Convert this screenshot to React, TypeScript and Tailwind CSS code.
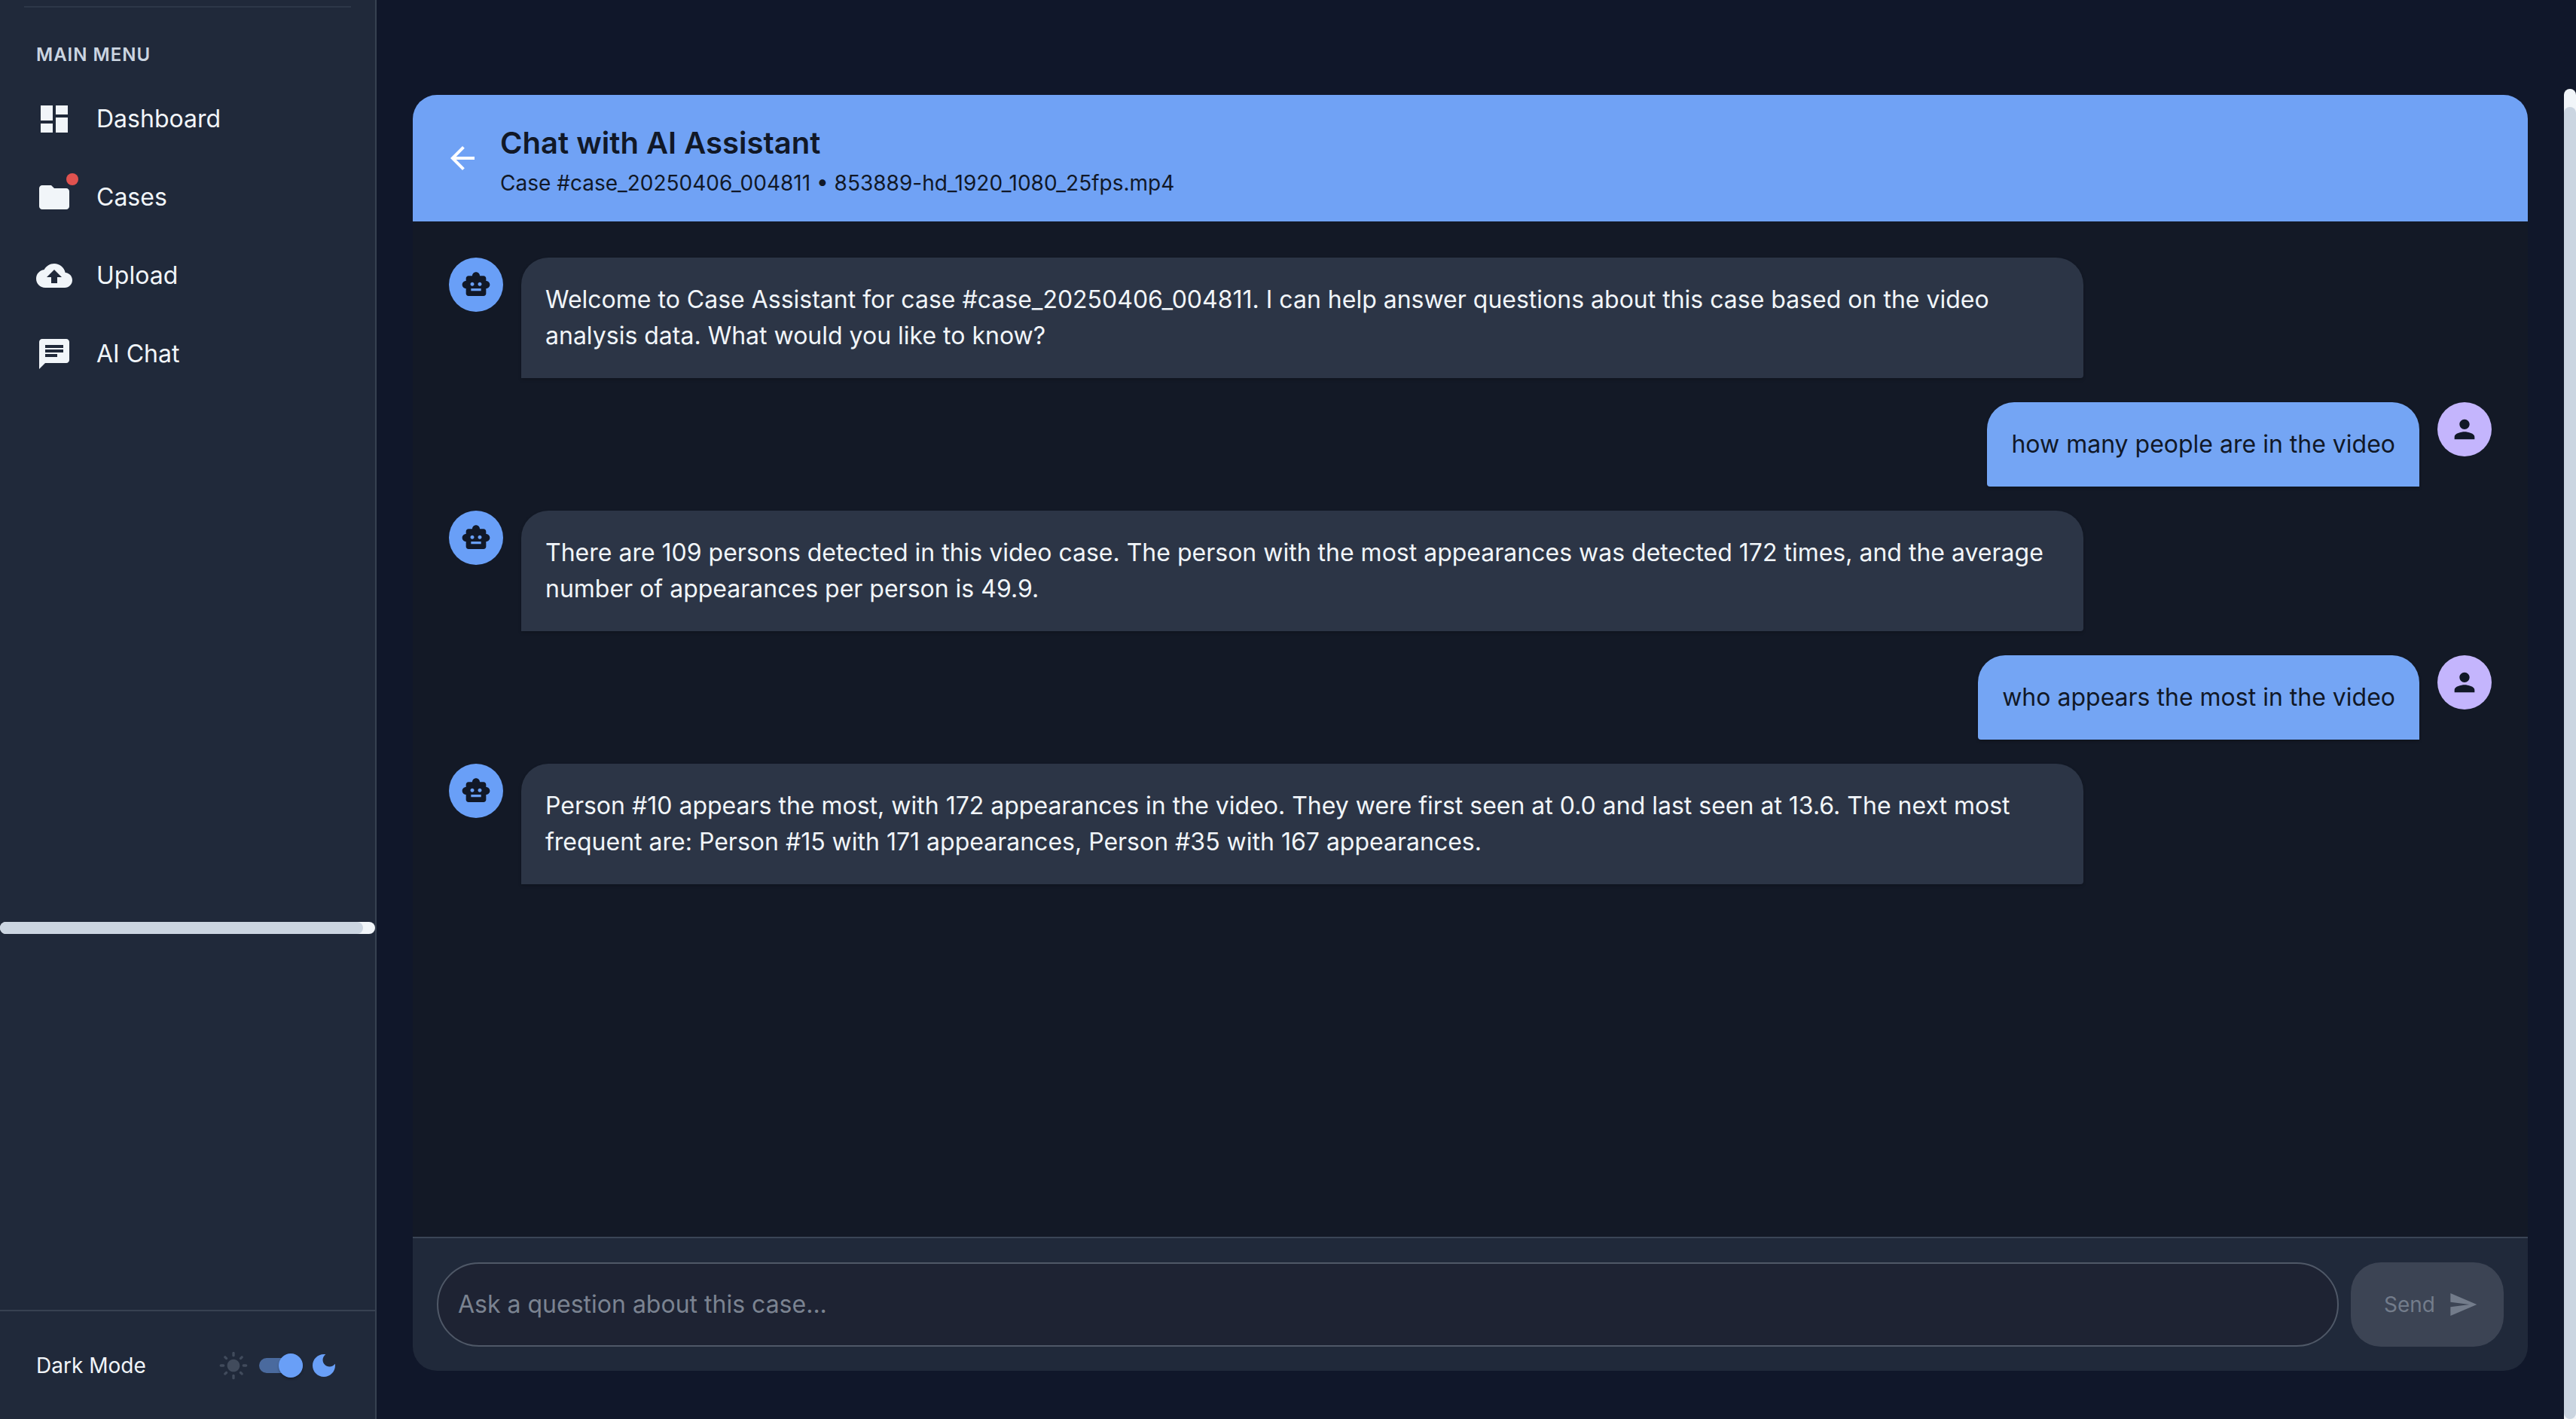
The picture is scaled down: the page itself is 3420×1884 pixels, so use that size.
const D = {
  dashboard: 'M3 13h8V3H3v10zm0 8h8v-6H3v6zm10 0h8V11h-8v10zm0-18v6h8V3h-8z',
  folder: 'M10 4H4c-1.1 0-1.99.9-1.99 2L2 18c0 1.1.9 2 2 2h16c1.1 0 2-.9 2-2V8c0-1.1-.9-2-2-2h-8l-2-2z',
  upload: 'M19.35 10.04C18.67 6.59 15.64 4 12 4 9.11 4 6.6 5.64 5.35 8.04 2.34 8.36 0 10.91 0 14c0 3.31 2.69 6 6 6h13c2.76 0 5-2.24 5-5 0-2.64-2.05-4.78-4.65-4.96zM14 13v4h-4v-4H7l5-5 5 5h-3z',
  chat: 'M20 2H4c-1.1 0-1.99.9-1.99 2L2 22l4-4h14c1.1 0 2-.9 2-2V4c0-1.1-.9-2-2-2zM6 9h12v2H6V9zm8 5H6v-2h8v2zm4-6H6V6h12v2z',
  toy: 'M20 9V7c0-1.1-.9-2-2-2h-3c0-1.66-1.34-3-3-3S9 3.34 9 5H6c-1.1 0-2 .9-2 2v2c-1.66 0-3 1.34-3 3s1.34 3 3 3v4c0 1.1.9 2 2 2h12c1.1 0 2-.9 2-2v-4c1.66 0 3-1.34 3-3s-1.34-3-3-3zM7.5 11.5c0-.83.67-1.5 1.5-1.5s1.5.67 1.5 1.5S9.83 13 9 13s-1.5-.67-1.5-1.5zM16 17H8v-2h8v2zm-1-4c-.83 0-1.5-.67-1.5-1.5S14.17 10 15 10s1.5.67 1.5 1.5S15.83 13 15 13z',
  person: 'M12 12c2.21 0 4-1.79 4-4s-1.79-4-4-4-4 1.79-4 4 1.79 4 4 4zm0 2c-2.67 0-8 1.34-8 4v2h16v-2c0-2.66-5.33-4-8-4z',
  back: 'M20 11H7.83l5.59-5.59L12 4l-8 8 8 8 1.41-1.41L7.83 13H20v-2z',
  send: 'M2.01 21L23 12 2.01 3 2 10l15 2-15 2z',
  sun: 'M12 7c-2.76 0-5 2.24-5 5s2.24 5 5 5 5-2.24 5-5-2.24-5-5-5zM2 13h2c.55 0 1-.45 1-1s-.45-1-1-1H2c-.55 0-1 .45-1 1s.45 1 1 1zm18 0h2c.55 0 1-.45 1-1s-.45-1-1-1h-2c-.55 0-1 .45-1 1s.45 1 1 1zM11 2v2c0 .55.45 1 1 1s1-.45 1-1V2c0-.55-.45-1-1-1s-1 .45-1 1zm0 18v2c0 .55.45 1 1 1s1-.45 1-1v-2c0-.55-.45-1-1-1s-1 .45-1 1zM5.99 4.58c-.39-.39-1.03-.39-1.41 0-.39.39-.39 1.03 0 1.41l1.06 1.06c.39.39 1.03.39 1.41 0s.39-1.03 0-1.41L5.99 4.58zm12.37 12.37c-.39-.39-1.03-.39-1.41 0-.39.39-.39 1.03 0 1.41l1.06 1.06c.39.39 1.03.39 1.41 0 .39-.39.39-1.03 0-1.41l-1.06-1.06zm1.06-10.96c.39-.39.39-1.03 0-1.41-.39-.39-1.03-.39-1.41 0l-1.06 1.06c-.39.39-.39 1.03 0 1.41s1.03.39 1.41 0l1.06-1.06zM7.05 18.36c.39-.39.39-1.03 0-1.41-.39-.39-1.03-.39-1.41 0l-1.06 1.06c-.39.39-.39 1.03 0 1.41s1.03.39 1.41 0l1.06-1.06z',
  moon: 'M12 3c-4.97 0-9 4.03-9 9s4.03 9 9 9 9-4.03 9-9c0-.46-.04-.92-.1-1.36-.98 1.37-2.58 2.26-4.4 2.26-2.98 0-5.4-2.42-5.4-5.4 0-1.81.89-3.42 2.26-4.4-.44-.06-.9-.1-1.36-.1z',
};

function Icon({ d, className }: { d: string; className: string }) {
  return (
    <svg viewBox="0 0 24 24" fill="currentColor" className={className}>
      <path d={d} />
    </svg>
  );
}

function NavItem({ d, label, badge }: { d: string; label: string; badge?: boolean }) {
  return (
    <div className="flex h-[104px] items-center pl-12 text-[32px] leading-[48px] text-[#f1f5f9]">
      <div className="relative w-[80px] shrink-0">
        <Icon d={d} className="h-12 w-12" />
        {badge && <span className="absolute left-10 top-[-8px] h-4 w-4 rounded-full bg-[#e0524f]" />}
      </div>
      <span>{label}</span>
    </div>
  );
}

function AgentMessage({ text }: { text: string }) {
  return (
    <div className="flex items-start gap-6">
      <div className="flex h-[72px] w-[72px] shrink-0 items-center justify-center rounded-full bg-[#699ff7] text-[#111827]">
        <Icon d={D.toy} className="h-10 w-10" />
      </div>
      <div className="w-[2074px] rounded-t-[36px] rounded-br-[4px] bg-[#2c3546] p-8 text-[32px] leading-[48px] text-[#f1f5f9] shadow-[0_2px_4px_rgba(0,0,0,0.2)]">
        {text}
      </div>
    </div>
  );
}

function UserMessage({ text }: { text: string }) {
  return (
    <div className="flex items-start justify-end gap-6">
      <div className="rounded-t-[36px] rounded-bl-[4px] bg-[#74a5f4] p-8 text-[32px] leading-[48px] text-[#111827] shadow-[0_2px_4px_rgba(0,0,0,0.2)]">
        {text}
      </div>
      <div className="flex h-[72px] w-[72px] shrink-0 items-center justify-center rounded-full bg-[#c4b5fd] text-[#111827]">
        <Icon d={D.person} className="h-10 w-10" />
      </div>
    </div>
  );
}

export default function App() {
  return (
    <div className="flex h-[1884px] w-[3420px] overflow-hidden bg-[#10172a] font-['Inter',sans-serif]">
      {/* Sidebar */}
      <aside className="flex w-[500px] shrink-0 flex-col border-r-2 border-[#374151] bg-[#20293a]">
        <div className="flex h-[1240px] shrink-0 flex-col justify-between">
          <div>
            <div className="mx-8 mt-2 h-0.5 bg-[#2d3748]" />
            <div className="mb-[18px] mt-[48px] pl-12 text-[24px] font-semibold leading-[30px] tracking-[1px] text-[#cbd5e1]">
              MAIN MENU
            </div>
            <NavItem d={D.dashboard} label="Dashboard" />
            <NavItem d={D.folder} label="Cases" badge />
            <NavItem d={D.upload} label="Upload" />
            <NavItem d={D.chat} label="AI Chat" />
          </div>
          <div className="h-4 rounded-full bg-[#f1f5f9]">
            <div className="h-4 w-[482px] rounded-full bg-[#cbd5e1]" />
          </div>
        </div>
        <div className="flex-1" />
        <div className="flex h-[145px] items-center border-t-2 border-[#374151] pl-12 pr-[48px]">
          <span className="text-[28px] text-[#f1f5f9]">Dark Mode</span>
          <div className="ml-auto flex items-center">
            <Icon d={D.sun} className="h-10 w-10 text-[#414b5c]" />
            <div className="relative ml-[14px] mr-2 h-5 w-[58px] rounded-full bg-[#4a6a9e]">
              <span className="absolute right-0 top-[-6px] h-8 w-8 rounded-full bg-[#699ff7] shadow-[0_2px_3px_rgba(0,0,0,0.25)]" />
            </div>
            <Icon d={D.moon} className="h-10 w-10 text-[#699ff7]" />
          </div>
        </div>
      </aside>

      {/* Main */}
      <main className="flex min-w-0 flex-1 flex-col pb-16 pl-12 pr-12 pt-[126px]">
        <div className="flex flex-1 flex-col overflow-hidden rounded-[32px]">
          <header className="flex h-[168px] shrink-0 items-center bg-[#70a2f5] pl-[42px]">
            <Icon d={D.back} className="h-12 w-12 text-white" />
            <div className="ml-[26px] pt-[9px] text-[#111827]">
              <div className="text-[40px] font-semibold leading-[48px]">Chat with AI Assistant</div>
              <div className="mt-[9px] text-[28px] leading-[40px]">Case #case_20250406_004811 • 853889-hd_1920_1080_25fps.mp4</div>
            </div>
          </header>

          <div className="flex flex-1 flex-col gap-8 bg-[#131926] px-12 pt-12">
            <AgentMessage text="Welcome to Case Assistant for case #case_20250406_004811. I can help answer questions about this case based on the video analysis data. What would you like to know?" />
            <UserMessage text="how many people are in the video" />
            <AgentMessage text="There are 109 persons detected in this video case. The person with the most appearances was detected 172 times, and the average number of appearances per person is 49.9." />
            <UserMessage text="who appears the most in the video" />
            <AgentMessage text="Person #10 appears the most, with 172 appearances in the video. They were first seen at 0.0 and last seen at 13.6. The next most frequent are: Person #15 with 171 appearances, Person #35 with 167 appearances." />
          </div>

          <div className="flex h-[178px] shrink-0 gap-4 border-t-2 border-[#3a4556] bg-[#20293a] px-8 pt-8">
            <div className="flex h-28 flex-1 items-center rounded-full border-2 border-[#4f5867] bg-[#1e2333] pl-[26px] text-[32px] text-[#7b8391]">
              Ask a question about this case...
            </div>
            <div className="flex h-28 w-[203px] items-center gap-[17px] rounded-[40px] bg-[#3c4454] pl-[44px] text-[28px] text-[#737c8b]">
              <span>Send</span>
              <Icon d={D.send} className="h-10 w-10" />
            </div>
          </div>
        </div>
      </main>

      {/* Page scrollbar */}
      <div className="flex w-4 shrink-0 flex-col pt-[118px]">
        <div className="flex flex-1 flex-col rounded-t-full bg-[#f1f5f9] pt-6">
          <div className="flex-1 rounded-full bg-[#cbd5e1]" />
        </div>
      </div>
    </div>
  );
}
